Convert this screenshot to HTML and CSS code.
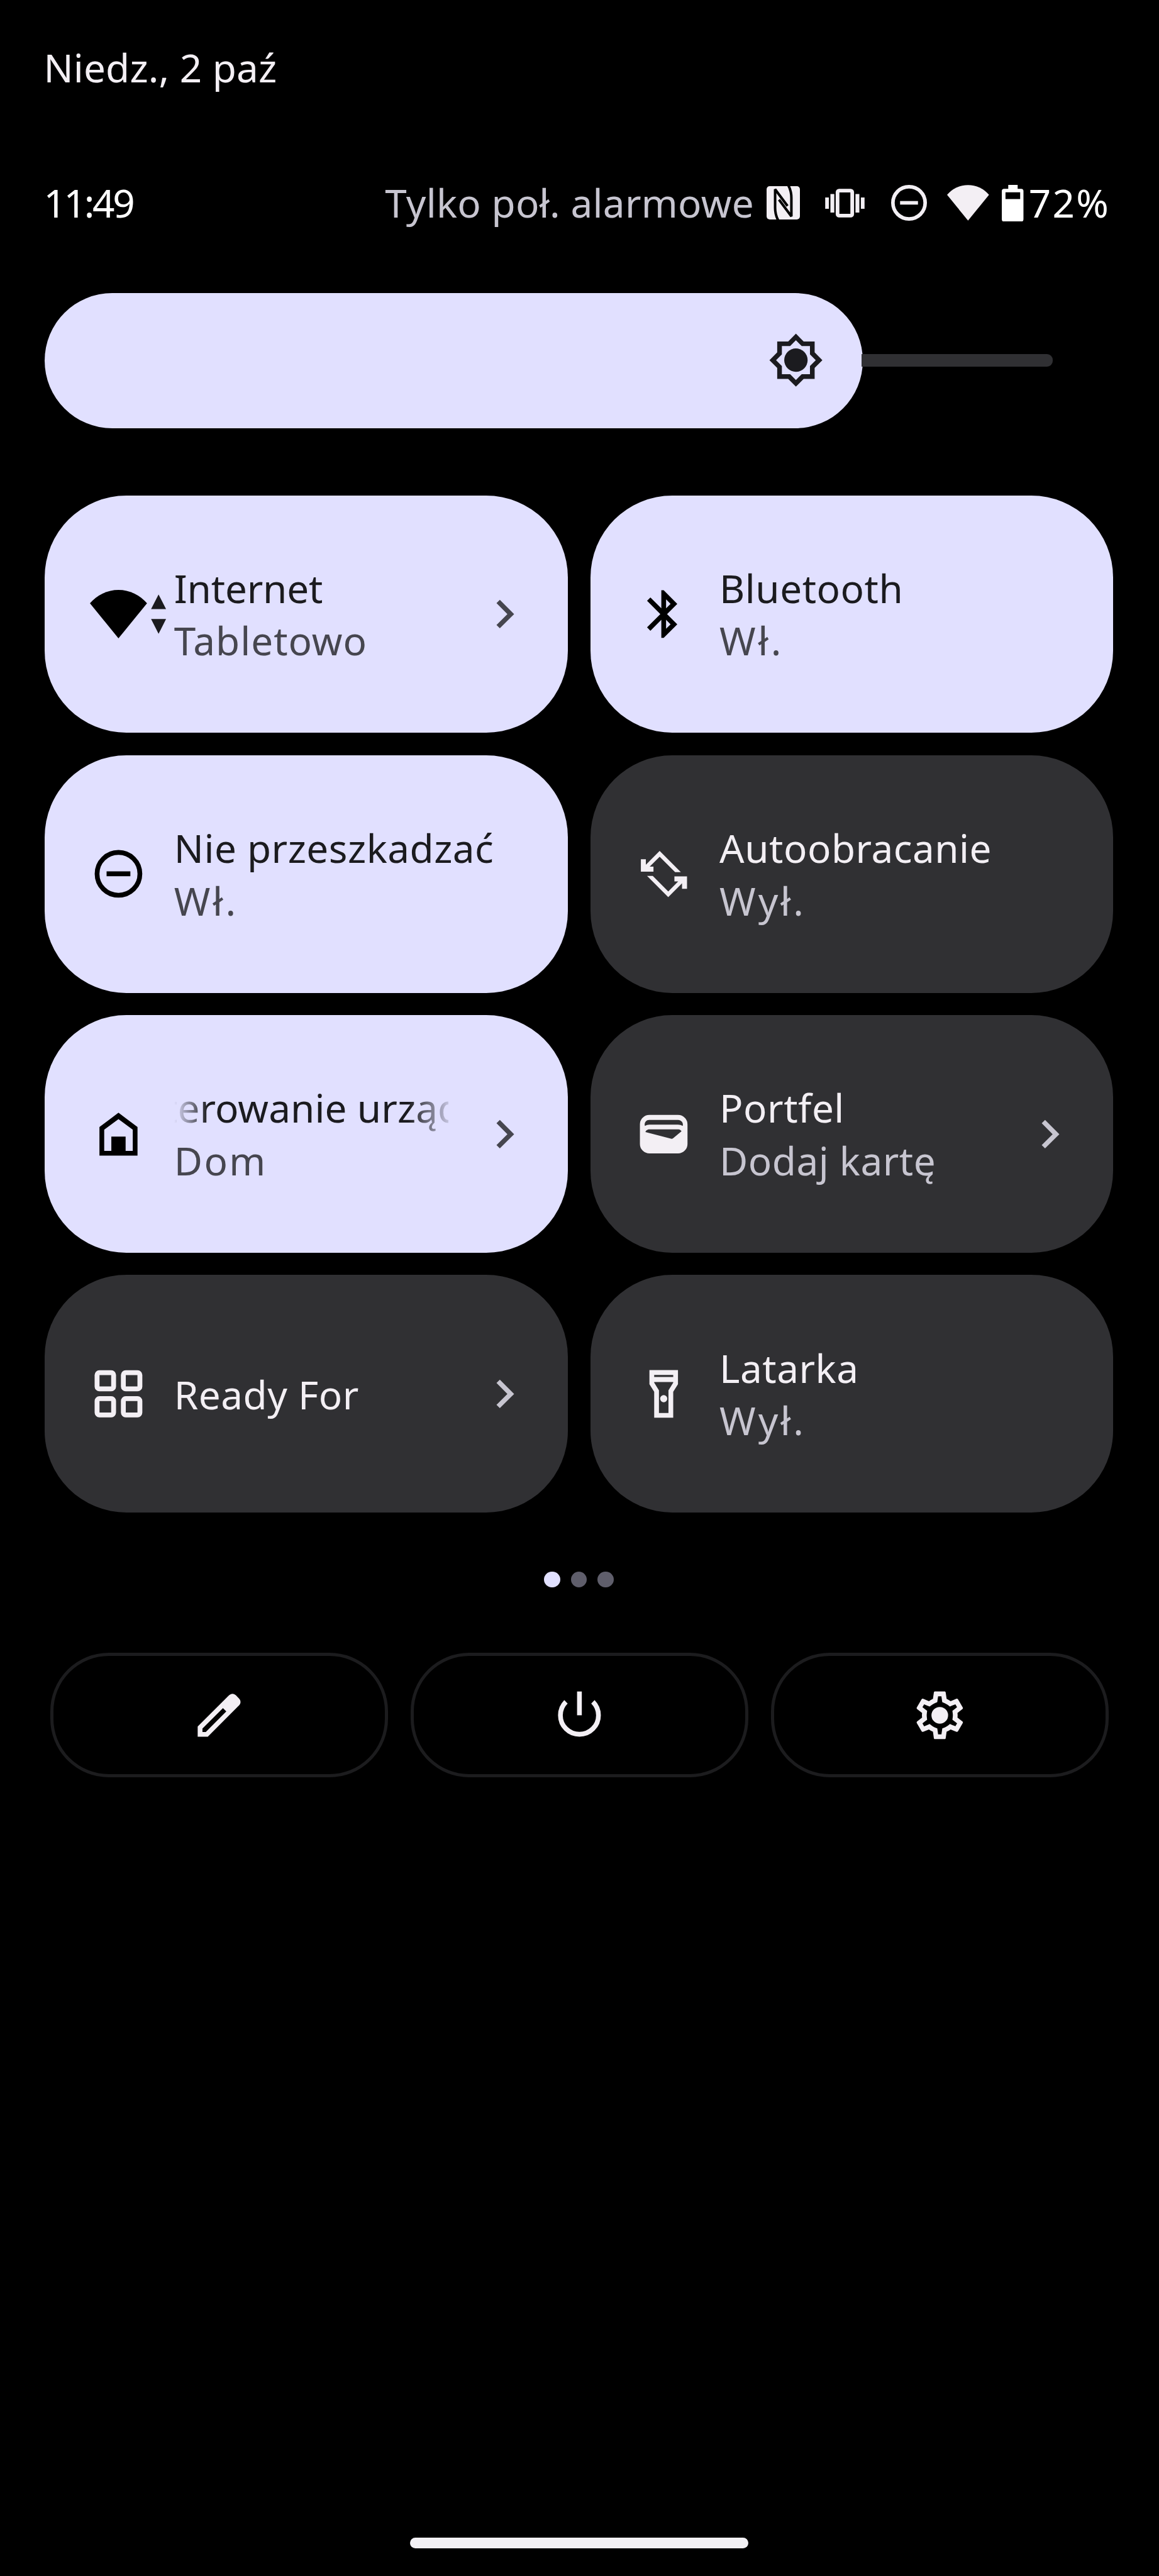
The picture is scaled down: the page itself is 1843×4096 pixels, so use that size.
FILE: index.html
```
<!DOCTYPE html>
<html lang="pl">
<head>
    <meta charset="UTF-8">
    <meta name="viewport" content="width=device-width, initial-scale=1.0">
    <title>Szybkie ustawienia</title>
    <link rel="stylesheet" href="styles.css">
</head>
<body>
    <div class="panel">
        <div class="date">Niedz., 2 paź</div>

        <div class="status-bar">
            <span class="clock">11:49</span>
            <div class="status-right">
                <span class="carrier">Tylko poł. alarmowe</span>
                <svg class="st-nfc" viewBox="0 0 86 86">
                    <rect width="86" height="86" rx="8" fill="currentColor"/>
                    <g fill="none" stroke="#000" stroke-width="6.5" stroke-linejoin="bevel">
                        <path d="M31 90C24 78 22 68 22 56V8L54 51"/>
                        <path d="M55 -4C62 8 64 18 64 30V78L32 35"/>
                    </g>
                </svg>
                <svg class="st-vibrate" viewBox="0 0 102 75">
                    <rect x="32" y="5" width="38" height="65" rx="4" fill="none" stroke="currentColor" stroke-width="9.5"/>
                    <path fill="currentColor" d="M0 23h9.5v29H0zM13.5 14h10v48h-10zM78.5 14h10v48h-10zM92.5 23h9.5v29h-9.5z"/>
                </svg>
                <svg class="st-dnd" viewBox="2 2 20 20">
                    <circle cx="12" cy="12" r="9" fill="none" stroke="currentColor" stroke-width="2"/>
                    <path fill="currentColor" d="M7 11h10v2H7z"/>
                </svg>
                <svg class="st-wifi" viewBox="0 0 24 24">
                    <path fill="currentColor" d="M12 22.2L0 7.5A15.6 15.6 0 0 1 24 7.5z"/>
                </svg>
                <svg class="st-battery" viewBox="0 0 56 95">
                    <path fill="#fff" fill-rule="evenodd" d="M16.7 0h24.3v10h9a6 6 0 0 1 6 6v73a6 6 0 0 1-6 6H6a6 6 0 0 1-6-6V16a6 6 0 0 1 6-6h10.7zM9.5 19v17.5h38V19z"/>
                </svg>
                <span class="percent">72%</span>
            </div>
        </div>

        <div class="brightness">
            <div class="brightness-fill">
                <svg viewBox="0 0 24 24">
                    <path fill="currentColor" fill-rule="evenodd" d="M20 8.69V4h-4.69L12 .69 8.69 4H4v4.69L.69 12 4 15.31V20h4.69L12 23.31 15.31 20H20v-4.69L23.31 12zM18 14.48V18h-3.52L12 20.48 9.52 18H6v-3.52L3.52 12 6 9.52V6h3.52L12 3.52 14.48 6H18v3.52L20.48 12z"/>
                    <circle cx="12" cy="12" r="5" fill="currentColor"/>
                </svg>
            </div>
            <div class="brightness-track"></div>
        </div>

        <div class="tiles">
            <div class="tile on">
                <svg class="icon" viewBox="0 0 24 24">
                    <path fill="#000" d="M12 22.2L0 7.5A15.6 15.6 0 0 1 24 7.5z"/>
                    <path fill="#1b1b1f" d="M25.7 9.9h6.3l-3.15-6.15zM25.7 14.1h6.3l-3.15 6.2z"/>
                </svg>
                <div class="label">
                    <div class="title tight">Internet</div>
                    <div class="sub wide">Tabletowo</div>
                </div>
                <svg class="chevron" viewBox="0 0 24 24"><path fill="currentColor" d="M10 6L8.59 7.41 13.17 12l-4.58 4.59L10 18l6-6z"/></svg>
            </div>

            <div class="tile on">
                <svg class="icon" viewBox="0 0 24 24">
                    <path fill="currentColor" d="M17.71 7.71L12 2h-1v7.59L6.41 5 5 6.41 10.59 12 5 17.59 6.41 19 11 14.41V22h1l5.71-5.71-4.3-4.29zM13 5.83l1.88 1.88L13 9.59zm1.88 10.46L13 18.17v-3.76z"/>
                </svg>
                <div class="label">
                    <div class="title">Bluetooth</div>
                    <div class="sub short">Wł.</div>
                </div>
            </div>

            <div class="tile on">
                <svg class="icon" viewBox="0 0 24 24">
                    <circle cx="12" cy="12" r="9" fill="none" stroke="currentColor" stroke-width="2"/>
                    <path fill="currentColor" d="M7 11h10v2H7z"/>
                </svg>
                <div class="label">
                    <div class="title">Nie przeszkadzać</div>
                    <div class="sub short">Wł.</div>
                </div>
            </div>

            <div class="tile">
                <svg class="icon" viewBox="0 0 24 24">
                    <g fill="currentColor">
                        <path id="arrow" d="M10.3 2.4l8.9 8.9H16.8L10.3 4.8 6.1 9h1.6v2.1H2.4V5.9h2.1V8.2z"/>
                        <use href="#arrow" transform="rotate(180 12.1 12.1)"/>
                    </g>
                </svg>
                <div class="label">
                    <div class="title">Autoobracanie</div>
                    <div class="sub short">Wył.</div>
                </div>
            </div>

            <div class="tile on">
                <svg class="icon" viewBox="0 0 24 24">
                    <path fill="currentColor" fill-rule="evenodd" d="M12 3l8 6v12H4V9zM12 5.7L6 10.1V19h3v-6h6v6h3v-8.9z"/>
                </svg>
                <div class="label">
                    <div class="title marquee">Sterowanie urządzeniami</div>
                    <div class="sub dom">Dom</div>
                </div>
                <svg class="chevron" viewBox="0 0 24 24"><path fill="currentColor" d="M10 6L8.59 7.41 13.17 12l-4.58 4.59L10 18l6-6z"/></svg>
            </div>

            <div class="tile">
                <svg class="icon" viewBox="0 0 24 24">
                    <path fill="currentColor" fill-rule="evenodd" d="M6 3.9h12a4 4 0 0 1 4 4v8.2a4 4 0 0 1-4 4H6a4 4 0 0 1-4-4V7.9a4 4 0 0 1 4-4zM6 6a1.9 1.9 0 0 0-1.9 2.5Q5 8 6 8h12q1.1 0 2 .5A2 2 0 0 0 18 6zM5.6 9.95Q4.6 10.2 4.3 11.1L15 13.9q.6.15 1-.2l3.5-2.9q-.4-.8-1.3-.85z"/>
                </svg>
                <div class="label">
                    <div class="title">Portfel</div>
                    <div class="sub">Dodaj kartę</div>
                </div>
                <svg class="chevron" viewBox="0 0 24 24"><path fill="currentColor" d="M10 6L8.59 7.41 13.17 12l-4.58 4.59L10 18l6-6z"/></svg>
            </div>

            <div class="tile">
                <svg class="icon" viewBox="0 0 24 24">
                    <g fill="none" stroke="currentColor" stroke-width="2.05">
                        <rect x="3" y="3.05" width="6.95" height="6.85" rx="1"/>
                        <rect x="14.05" y="3.05" width="6.95" height="6.85" rx="1"/>
                        <rect x="3" y="14" width="6.95" height="6.85" rx="1"/>
                        <rect x="14.05" y="14" width="6.95" height="6.85" rx="1"/>
                    </g>
                </svg>
                <div class="label">
                    <div class="title">Ready For</div>
                </div>
                <svg class="chevron" viewBox="0 0 24 24"><path fill="currentColor" d="M10 6L8.59 7.41 13.17 12l-4.58 4.59L10 18l6-6z"/></svg>
            </div>

            <div class="tile">
                <svg class="icon" viewBox="0 0 24 24">
                    <path fill="currentColor" fill-rule="evenodd" d="M6 2h12v5.9l-2 3.2V22H8V11.1L6 7.9zM8 4v.9h8V4zM8 7v.3l2 3.2V20h4v-9.5l2-3.2V7z"/>
                    <circle cx="12" cy="14" r="1.5" fill="currentColor"/>
                </svg>
                <div class="label">
                    <div class="title">Latarka</div>
                    <div class="sub short">Wył.</div>
                </div>
            </div>
        </div>

        <div class="dots">
            <span class="dot active"></span>
            <span class="dot"></span>
            <span class="dot"></span>
        </div>

        <div class="actions">
            <div class="action">
                <svg viewBox="0 0 24 24">
                    <path fill="currentColor" fill-rule="evenodd" d="M3 21v-4.25L16.2 3.575q.3-.275.663-.425.362-.15.762-.15t.775.15q.375.15.65.45L20.425 5q.3.275.437.65.138.375.138.75 0 .4-.138.763-.137.362-.437.662L7.25 21zM5 19h1.4l8.625-8.625-1.4-1.4L5 17.6z"/>
                </svg>
            </div>
            <div class="action">
                <svg viewBox="0 0 24 24">
                    <path fill="currentColor" d="M13 2h-2v10h2z"/>
                    <path fill="none" stroke="currentColor" stroke-width="2" d="M6.34 6.34a8 8 0 1 0 11.32 0"/>
                </svg>
            </div>
            <div class="action">
                <svg viewBox="0 0 24 24">
                    <path fill="currentColor" fill-rule="evenodd" d="M19.43 12.98c.04-.32.07-.64.07-.98 0-.34-.03-.66-.07-.98l2.11-1.65c.19-.15.24-.42.12-.64l-2-3.46c-.09-.16-.26-.25-.44-.25-.06 0-.12.01-.17.03l-2.49 1c-.52-.4-1.08-.73-1.69-.98l-.38-2.65C14.46 2.18 14.25 2 14 2h-4c-.25 0-.46.18-.49.42l-.38 2.65c-.61.25-1.17.59-1.69.98l-2.49-1c-.06-.02-.12-.03-.18-.03-.17 0-.34.09-.43.25l-2 3.46c-.13.22-.07.49.12.64l2.11 1.65c-.04.32-.07.65-.07.98 0 .33.03.66.07.98l-2.11 1.65c-.19.15-.24.42-.12.64l2 3.46c.09.16.26.25.44.25.06 0 .12-.01.17-.03l2.49-1c.52.4 1.08.73 1.69.98l.38 2.65c.03.24.24.42.49.42h4c.25 0 .46-.18.49-.42l.38-2.65c.61-.25 1.17-.59 1.69-.98l2.49 1c.06.02.12.03.18.03.17 0 .34-.09.43-.25l2-3.46c.12-.22.07-.49-.12-.64zm-1.98-1.71c.04.31.05.52.05.73 0 .21-.02.43-.05.73l-.14 1.13.89.7 1.08.84-.7 1.21-1.27-.51-1.04-.42-.9.68c-.43.32-.84.56-1.25.73l-1.06.43-.16 1.13-.2 1.35h-1.4l-.19-1.35-.16-1.13-1.06-.43c-.43-.18-.83-.41-1.23-.71l-.91-.7-1.06.43-1.27.51-.7-1.21 1.08-.84.89-.7-.14-1.13c-.03-.31-.05-.54-.05-.74s.02-.43.05-.73l.14-1.13-.89-.7-1.08-.84.7-1.21 1.27.51 1.04.42.9-.68c.43-.32.84-.56 1.25-.73l1.06-.43.16-1.13.2-1.35h1.39l.19 1.35.16 1.13 1.06.43c.43.18.83.41 1.23.71l.91.7 1.06-.43 1.27-.51.7 1.21-1.07.85-.89.7z"/>
                    <circle cx="12" cy="12" r="3.5" fill="currentColor"/>
                </svg>
            </div>
        </div>

        <div class="home-bar"></div>
    </div>
</body>
</html>
```
FILE: styles.css
```
* {
    box-sizing: border-box;
}

body {
    margin: 0;
    background: #000;
    color: #f3eff4;
    font-family: "Noto Sans", sans-serif;
    font-size: 62px;
    line-height: 83.5px;
    letter-spacing: 0.5px;
}

svg {
    display: block;
    flex-shrink: 0;
}

.panel {
    display: flex;
    flex-direction: column;
    width: 1843px;
    height: 4096px;
    padding: 66px 73px 44px 71.4px;
    overflow: hidden;
}

.date {
    margin-left: -2px;
    letter-spacing: 0.2px;
}

/* status bar */

.status-bar {
    display: flex;
    align-items: center;
    justify-content: space-between;
    margin-top: 131.5px;
    margin-left: -2px;
    padding-right: 5px;
}

.clock {
    color: #fff;
    letter-spacing: -3.3px;
}

.status-right {
    display: flex;
    align-items: center;
}

.carrier {
    color: #c7c5d0;
    letter-spacing: 0.3px;
}

.st-nfc {
    width: 53px;
    height: 53px;
    margin-left: 20px;
}

.st-vibrate {
    width: 63px;
    height: 46px;
    margin-left: 40.5px;
}

.st-dnd {
    width: 57px;
    height: 57px;
    margin-left: 42px;
}

.st-wifi {
    width: 66.7px;
    height: 66.7px;
    margin-left: 32px;
}

.st-battery {
    width: 34.5px;
    height: 58.4px;
    margin-left: 20px;
}

.percent {
    margin-left: 8px;
    color: #fff;
    letter-spacing: 2.3px;
}

/* brightness */

.brightness {
    display: flex;
    align-items: center;
    margin-top: 101px;
}

.brightness-fill {
    display: flex;
    align-items: center;
    justify-content: flex-end;
    width: 1301px;
    height: 215px;
    padding-right: 62px;
    border-radius: 108px;
    background: #e1e0ff;
    color: #1b1b1f;
}

.brightness-fill svg {
    width: 89.3px;
    height: 89.3px;
}

.brightness-track {
    width: 304px;
    height: 19.5px;
    margin-left: -2px;
    border-radius: 0 9px 9px 0;
    background: #303033;
}

/* tiles */

.tiles {
    display: grid;
    grid-template-columns: 831.2px 831.2px;
    column-gap: 36.1px;
    row-gap: 35.5px;
    margin-top: 107px;
}

.tile {
    display: flex;
    align-items: center;
    height: 377.8px;
    padding: 0 54.6px 0 71.3px;
    border-radius: 130px;
    background: #303033;
}

.tile.on {
    background: #e1e0ff;
    color: #000;
}

.icon {
    width: 90.8px;
    height: 90.8px;
    overflow: visible;
}

.label {
    flex: 1;
    min-width: 0;
    margin-left: 43.3px;
    padding-top: 2px;
    white-space: nowrap;
}

.on .title {
    color: #1b1b1f;
}

.sub,
.chevron {
    color: #c7c5d0;
}

.on .sub,
.on .chevron {
    color: #46464f;
}

.chevron {
    width: 90.8px;
    height: 90.8px;
}

.short {
    letter-spacing: 4px;
}

.wide {
    letter-spacing: 1px;
}

.tight {
    letter-spacing: -0.2px;
}

.dom {
    letter-spacing: 2.4px;
}

.marquee {
    width: 436px;
    overflow: hidden;
    text-indent: -51px;
    letter-spacing: 0.1px;
    -webkit-mask-image: linear-gradient(to right, transparent 0, #000 54px, #000 372px, rgba(0, 0, 0, 0.15) 100%);
    mask-image: linear-gradient(to right, transparent 0, #000 54px, #000 372px, rgba(0, 0, 0, 0.15) 100%);
}

/* page dots */

.dots {
    display: flex;
    justify-content: center;
    gap: 17px;
    margin-top: 93.5px;
}

.dot {
    width: 25.6px;
    height: 25.6px;
    border-radius: 50%;
    background: #5f5e6b;
}

.dot.active {
    background: #e1e0ff;
}

/* bottom buttons */

.actions {
    display: flex;
    gap: 36px;
    margin: 104px 7px 0 8.6px;
}

.action {
    display: flex;
    flex: 1;
    align-items: center;
    justify-content: center;
    height: 198px;
    border: 5px solid #1c1c1e;
    border-radius: 93px;
}

.action svg {
    width: 90.8px;
    height: 90.8px;
}

.home-bar {
    width: 538px;
    height: 17px;
    margin: auto auto 0;
    border-radius: 9px;
    background: #f3f1f5;
}
```
